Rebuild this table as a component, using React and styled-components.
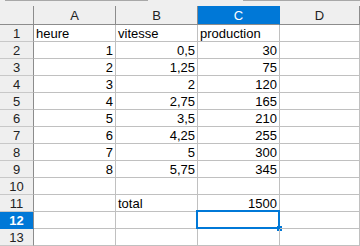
import styled, { createGlobalStyle } from "styled-components";

const Global = createGlobalStyle`
  html, body { margin: 0; padding: 0; background: #ffffff; }
  body { font-family: "Liberation Sans", Arial, sans-serif; overflow: hidden; }
`;

const Sheet = styled.div`
  width: 360px;
  height: 246px;
  overflow: hidden;
  background: #ffffff;
`;

const TopStrip = styled.div`
  height: 6px;
  background: #efefef;
  display: flex;
`;

const StripPart = styled.div`
  width: ${(p) => p.$w}px;
  flex: ${(p) => (p.$w ? "none" : "1")};
  border-top: 1px solid ${(p) => (p.$line ? "#a8a8a8" : "transparent")};
  box-sizing: border-box;
`;

const Grid = styled.div`
  display: grid;
  grid-template-columns: 34px 82px 82px 82px 80px 1fr;
  grid-template-rows: 19px;
  grid-auto-rows: 17px;
`;

const ColHead = styled.div`
  box-sizing: border-box;
  background: ${(p) => (p.$sel ? "#0078d7" : "#efefef")};
  color: ${(p) => (p.$sel ? "#ffffff" : "#222222")};
  border-right: 1px solid ${(p) => (p.$sel ? "#0078d7" : "#8c8c8c")};
  border-bottom: 1px solid #8c8c8c;
  font-size: 13px;
  display: flex;
  align-items: center;
  justify-content: center;
  padding-top: 1px;
`;

const RowHead = styled.div`
  box-sizing: border-box;
  background: ${(p) => (p.$sel ? "#0078d7" : "#efefef")};
  color: ${(p) => (p.$sel ? "#ffffff" : "#222222")};
  font-weight: ${(p) => (p.$sel ? "bold" : "normal")};
  border-right: 1px solid #8c8c8c;
  border-bottom: 1px solid ${(p) => (p.$sel ? "#0078d7" : "#c8c8c8")};
  font-size: 13px;
  display: flex;
  align-items: center;
  justify-content: center;
`;

const Cell = styled.div`
  position: relative;
  box-sizing: border-box;
  border-right: 1px solid #c0c0c0;
  border-bottom: 1px solid #c0c0c0;
  font-size: 13px;
  color: #000000;
  display: flex;
  align-items: center;
  justify-content: ${(p) => (p.$num ? "flex-end" : "flex-start")};
  padding: 1px 2px 0 2px;
  white-space: nowrap;
`;

const Cursor = styled.div`
  position: absolute;
  left: -2px;
  top: -2px;
  right: -1px;
  bottom: -1px;
  border: 2px solid #0078d7;
  pointer-events: none;
`;

const Handle = styled.div`
  position: absolute;
  right: -4px;
  bottom: -4px;
  width: 5px;
  height: 5px;
  background: #0078d7;
`;

const rows = [
  ["heure", "vitesse", "production"],
  [1, "0,5", 30],
  [2, "1,25", 75],
  [3, "2", 120],
  [4, "2,75", 165],
  [5, "3,5", 210],
  [6, "4,25", 255],
  [7, "5", 300],
  [8, "5,75", 345],
  ["", "", ""],
  ["", "total", 1500],
  ["", "", ""],
  ["", "", ""],
];

const cols = ["A", "B", "C", "D", "E"];

export default function App() {
  return (
    <>
      <Global />
      <Sheet>
        <TopStrip>
          <StripPart $w={5} />
          <StripPart $w={143} $line />
          <StripPart $w={95} />
          <StripPart $line />
        </TopStrip>
        <Grid>
          <ColHead />
          {cols.map((c) => (
            <ColHead key={c} $sel={c === "C"}>
              {c === "E" ? "" : c}
            </ColHead>
          ))}
          {rows.map((r, i) => (
            <Row key={i} n={i + 1} values={r} />
          ))}
        </Grid>
      </Sheet>
    </>
  );
}

function Row({ n, values }) {
  const isNum = (v, i) => i === 0 && n === 1 ? false : typeof v === "number" || /^[\d,]+$/.test(v);
  return (
    <>
      <RowHead $sel={n === 12}>{n}</RowHead>
      {values.map((v, i) => (
        <Cell key={i} $num={isNum(v, i)}>
          {v}
          {n === 12 && i === 2 && (
            <Cursor>
              <Handle />
            </Cursor>
          )}
        </Cell>
      ))}
      <Cell />
      <Cell />
    </>
  );
}
